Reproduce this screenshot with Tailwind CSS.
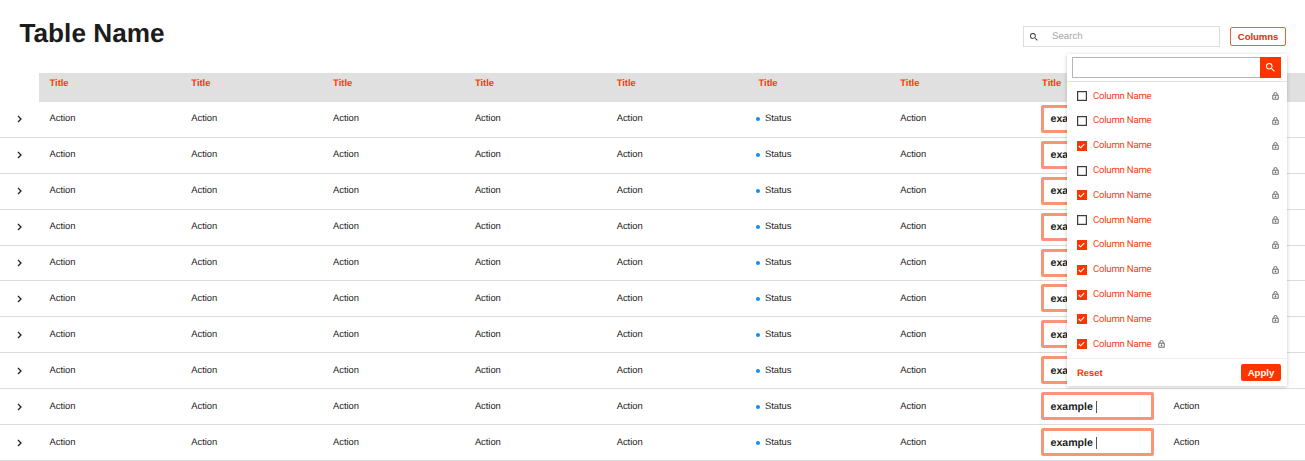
<!DOCTYPE html>
<html lang="en">
<head>
<meta charset="utf-8">
<title>Table Name</title>
<script src="https://cdn.jsdelivr.net/npm/@tailwindcss/browser@4"></script>
</head>
<body class="relative w-[1305px] h-[461px] overflow-hidden bg-white font-['Liberation_Sans',Arial,sans-serif] text-[#1c1c1c] [text-rendering:geometricPrecision]">
<header class="flex h-[73px] items-start pl-[19.5px] pr-[19px]">
  <h1 class="mt-[17px] text-[26.2px] leading-[32px] font-bold whitespace-nowrap">Table Name</h1>
  <div class="ml-auto mt-[26px] flex h-[21px] w-[197px] items-center border border-[#dedede] pl-[6px]">
    <svg class="h-[8px] w-[8px]" viewBox="3 3 18 18" fill="#333"><path d="M15.5 14h-.79l-.28-.27A6.47 6.47 0 0 0 16 9.5 6.5 6.5 0 1 0 9.5 16c1.61 0 3.09-.59 4.23-1.57l.27.28v.79l5 4.99L20.49 19l-4.99-5zm-6 0C7.01 14 5 11.99 5 9.5S7.01 5 9.5 5 14 7.01 14 9.5 11.99 14 9.5 14z"/></svg>
    <span class="ml-[14px] pt-px text-[9.7px] leading-[12px] text-[#a6a6a6]">Search</span>
  </div>
  <button class="ml-[10px] mt-[27px] h-[19px] w-[56px] rounded-[2px] border border-[#e2643f] text-[9.6px] leading-[12px] tracking-[-0.1px] font-bold text-[#d9300a]">Columns</button>
</header>
<div class="ml-[39px] grid h-[28.9px] grid-cols-[repeat(7,141.8px)_131.5px_1fr] bg-[#e0e0e0] pl-[10.5px] pt-[5px] text-[9.5px] leading-[12px] tracking-[-0.05px] font-bold text-[#fa3c00]" id="head"></div>
<main id="rows"></main>

<section class="absolute left-[1067px] top-[54px] flex h-[332px] w-[220px] flex-col bg-white font-[Roboto,sans-serif] shadow-[0_1px_4px_rgba(0,0,0,0.22)]">
  <div class="flex h-[28px] shrink-0 border-b border-[#e2e2e2] pl-[5px] pt-[3px]">
    <div class="h-[21px] w-[188px] rounded-l-[1px] border border-r-0 border-[#b5b5b5]"></div>
    <div class="flex h-[21px] w-[21px] items-center justify-center bg-[#fa3600]">
      <svg class="h-[9px] w-[9px]" viewBox="3 3 18 18" fill="#fff"><path d="M15.5 14h-.79l-.28-.27A6.47 6.47 0 0 0 16 9.5 6.5 6.5 0 1 0 9.5 16c1.61 0 3.09-.59 4.23-1.57l.27.28v.79l5 4.99L20.49 19l-4.99-5zm-6 0C7.01 14 5 11.99 5 9.5S7.01 5 9.5 5 14 7.01 14 9.5 11.99 14 9.5 14z"/></svg>
    </div>
  </div>
  <div class="pt-[1.8px]" id="options"></div>
  <footer class="mt-auto flex h-[28px] items-center justify-between border-t border-[#f0f0f0] pl-[10px] pr-[6px] font-['Liberation_Sans',Arial,sans-serif] text-[9.4px] leading-[12px] font-bold">
    <span class="text-[#fa3600]">Reset</span>
    <button class="h-[17px] w-[40px] rounded-[2px] bg-[#fa3600] text-[9.6px] text-white">Apply</button>
  </footer>
</section>

<script>
  document.getElementById('head').innerHTML = '<span>Title</span>'.repeat(8);

  const action = '<span>Action</span>';
  const status = '<span class="flex items-center"><i class="mt-[2px] -ml-[2.5px] mr-[5px] h-[4px] w-[4px] rounded-full bg-[#0b90fb]"></i>Status</span>';
  const field = '<span class="-mt-[7.5px] flex h-[28px] w-[113px] items-center rounded-[2px] border-[3px] border-[#fa9478] -ml-px pl-[6.5px] pt-px text-[10.6px] leading-[12px] font-bold">example<i class="ml-[3px] h-[12px] w-px bg-[#555]"></i></span>';
  document.getElementById('rows').innerHTML = Array.from({ length: 10 }, () =>
    '<div class="flex h-[35.92px] border-b border-[#dcdcdc] pl-[17px]">' +
    '<svg class="mt-[13.6px] h-[8px] w-[5px]" viewBox="0 0 5 8" fill="none" stroke="#222" stroke-width="1.3"><path d="M1 1l3 3-3 3"/></svg>' +
    '<div class="ml-[27.5px] grid h-[12px] grow items-start grid-cols-[repeat(7,141.8px)_131.5px_1fr] mt-[10.5px] text-[9.4px] leading-[12px] tracking-[-0.03px]">' +
    action.repeat(5) + status + action + field + action + '</div></div>').join('');

  const lock = '<svg class="h-[8px] w-[7px]" viewBox="0 0 14 16" fill="none" stroke="#555" stroke-width="1.7"><path d="M1.5 6.5h11v8h-11zM3.8 6V4.2a3.2 3.2 0 0 1 6.4 0V6"/><circle cx="7" cy="10.5" r="1" fill="#555"/></svg>';
  const off = '<svg class="h-[10px] w-[10px]" viewBox="0 0 10 10" fill="none" stroke="#3c3c3c" stroke-width="1.25"><rect x=".6" y=".6" width="8.8" height="8.8"/></svg>';
  const on = '<i class="flex h-[10px] w-[10px] items-center justify-center bg-[#fa3600]"><svg class="h-[6px] w-[7px]" viewBox="0 0 7 6" fill="none" stroke="#fff" stroke-width="1.1"><path d="M.8 3l1.8 1.8L6.2 1.1"/></svg></i>';
  document.getElementById('options').innerHTML = [0, 0, 1, 0, 1, 0, 1, 1, 1, 1, 1].map((checked, i) =>
    '<div class="flex h-[24.8px] items-center pl-[9.5px] pr-[8.5px] text-[9.6px] leading-[12px] tracking-[-0.23px] text-[#fa4010]">' +
    (checked ? on : off) + '<span class="ml-[6.5px] pt-px">Column Name</span>' +
    (i < 10 ? '<span class="ml-auto">' : '<span class="ml-[6.5px]">') + lock + '</span></div>').join('');
</script>
</body>
</html>
